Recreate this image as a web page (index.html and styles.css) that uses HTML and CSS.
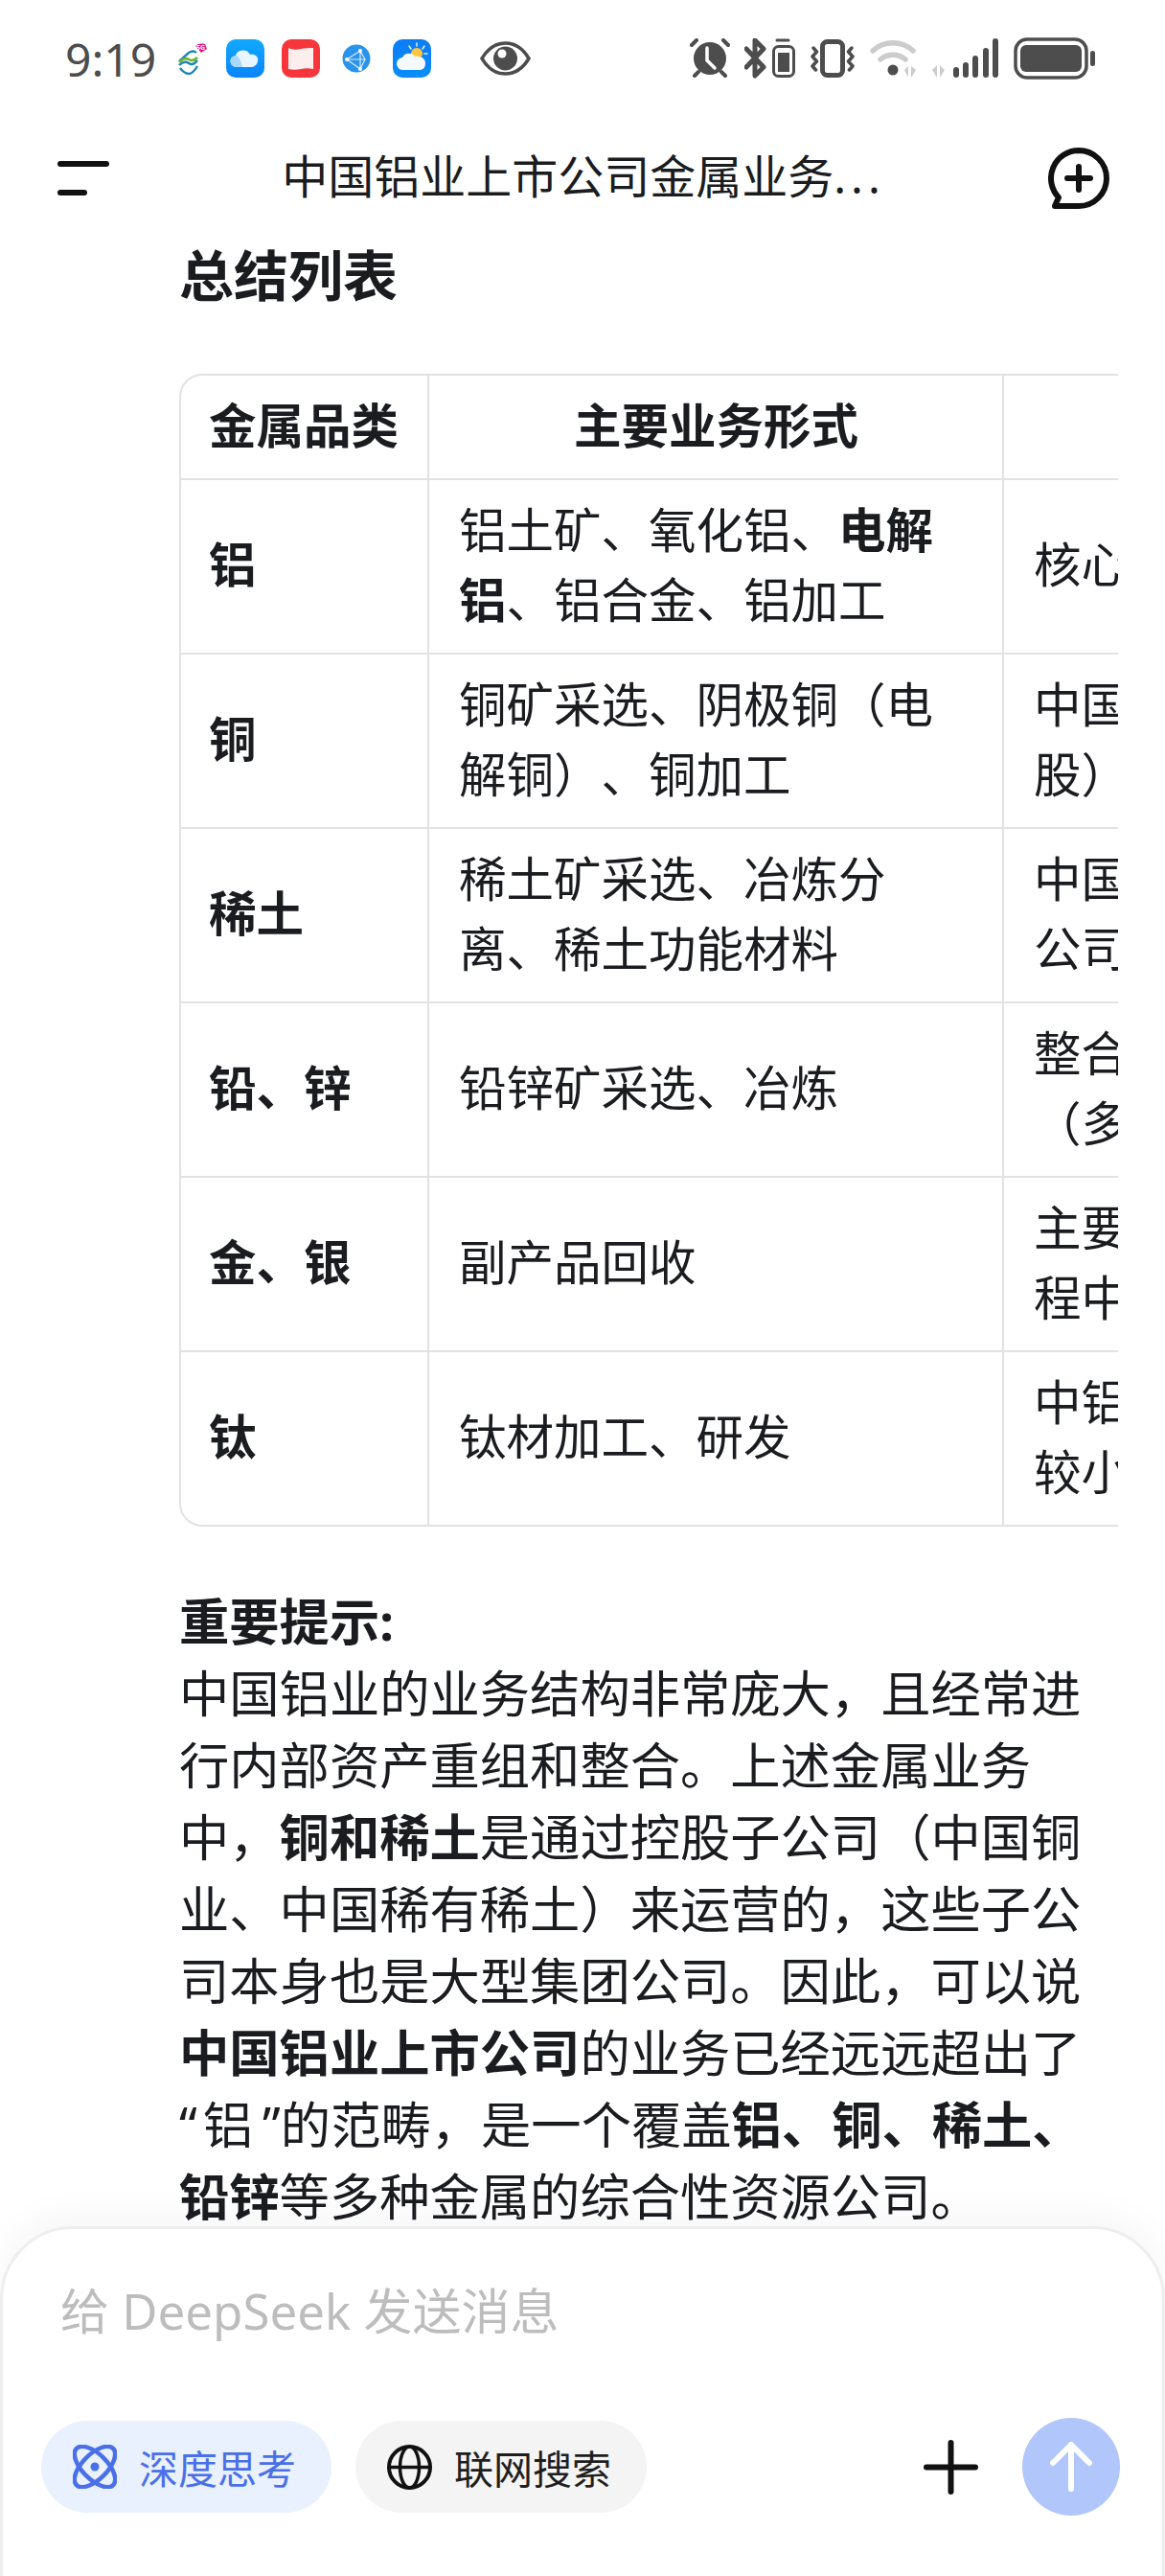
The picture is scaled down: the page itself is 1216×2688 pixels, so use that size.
FILE: index.html
```html
<!DOCTYPE html>
<html lang="zh-CN">
<head>
    <meta charset="UTF-8">
    <meta name="viewport" content="width=device-width, initial-scale=1.0">
    <title>中国铝业上市公司金属业务</title>
    <link rel="stylesheet" href="styles.css">
</head>
<body>
<div class="screen">
    <!-- status bar -->
    <div class="status">
        <div class="status-left">
            <span class="time">9:19</span>
            <svg class="ic-mobile" width="32" height="34" viewBox="0 0 32 34">
                <path d="M20 4c2-3 8-3 10-2l2 5-6 4z" fill="#e0157f"/>
                <text x="21" y="8" class="badge-text">5G</text>
                <path d="M3 20 13 11c3-2 6-2 8 0" fill="none" stroke="#1b86b8" stroke-width="2.4"/>
                <path d="M3 21c3-3 7-5 10-3s6 1 9-2" fill="none" stroke="#6fb52c" stroke-width="2.6"/>
                <path d="M3 24c3-3 7-4 10-2s6 1 9-3" fill="none" stroke="#1b86b8" stroke-width="2.4"/>
                <path d="M4 27c2 3 6 6 9 6s6-3 9-8" fill="none" stroke="#1b86b8" stroke-width="2.4"/>
            </svg>
            <svg class="ic-app ic-cloud" width="40" height="40" viewBox="0 0 40 40">
                <defs>
                    <linearGradient id="skyA" x1="0" y1="0" x2="0" y2="1"><stop offset="0" stop-color="#12aaff"/><stop offset="1" stop-color="#0a84fb"/></linearGradient>
                </defs>
                <rect width="40" height="40" rx="10" fill="url(#skyA)"/>
                <path d="M11 29a6 6 0 0 1-1-12c1-6 12-8 15-1 6-1 9 3 8 7-1 4-4 6-7 6z" fill="#eaf6ff"/>
                <path d="M11 29a6 6 0 0 1-1-12c2 0 4 2 5 5l2 7z" fill="#a9d8fb"/>
            </svg>
            <svg class="ic-app" width="40" height="40" viewBox="0 0 40 40">
                <rect width="40" height="40" rx="10" fill="#f6363b"/>
                <path d="M7 9c4 2 8 2 13 1s9-1 13-1v22c-4-1-9-1-13 0s-9 1-13 0z" fill="#fdeeee"/>
            </svg>
            <svg class="ic-globe" width="30" height="30" viewBox="0 0 30 30">
                <circle cx="15" cy="15" r="14.5" fill="#2a93ec"/>
                <path d="M19 7 5 16l14 10M19 7l5 9-5 10zM5 16h19" fill="none" stroke="#d8eeff" stroke-width="1.2"/>
                <circle cx="19" cy="7" r="2" fill="#fff"/><circle cx="5" cy="16" r="2" fill="#fff"/><circle cx="19" cy="26" r="2" fill="#fff"/>
            </svg>
            <svg class="ic-app ic-weather" width="40" height="40" viewBox="0 0 40 40">
                <defs>
                    <linearGradient id="skyB" x1="0" y1="0" x2="0" y2="1"><stop offset="0" stop-color="#0d7cf4"/><stop offset="1" stop-color="#0a8dfb"/></linearGradient>
                </defs>
                <rect width="40" height="40" rx="10" fill="url(#skyB)"/>
                <circle cx="25" cy="15" r="6" fill="#ffc63d"/>
                <path d="M25 4v3M17 7l2 3M33 7l-2 3M36 15h-3" stroke="#dff1ff" stroke-width="1.5" stroke-linecap="round"/>
                <path d="M11 32a6.500 6.500 0 0 1-1-13c2-5 10-6 13-1 6-1 11 2 11 7s-3 7-6 7z" fill="#f4faff"/>
            </svg>
            <svg class="ic-eye" width="53" height="36" viewBox="0 0 53 36">
                <path d="M2 18C8 8 17 2 26.500 2S45 8 51 18c-6 10-15 16-24.500 16S8 28 2 18z" fill="none" stroke="#4d4d4d" stroke-width="3.500"/>
                <circle cx="26.500" cy="18" r="12.500" fill="#4d4d4d"/>
                <circle cx="23" cy="13" r="4.500" fill="#fff"/>
            </svg>
        </div>
        <div class="status-right">
            <svg width="42" height="42" viewBox="0 0 42 42">
                <circle cx="21" cy="21" r="17" fill="#4d4d4d"/>
                <path d="M2 7 7 2M40 7l-5-5M9 35l-4 4M33 35l4 4" stroke="#4d4d4d" stroke-width="4" stroke-linecap="round"/>
                <path d="M18 10v13l8 8" fill="none" stroke="#fff" stroke-width="3.500" stroke-linecap="round"/>
            </svg>
            <svg width="54" height="42" viewBox="0 0 54 42">
                <path d="M2 11 20 30l-9 9V2l9 9L2 30" fill="none" stroke="#4d4d4d" stroke-width="5" stroke-linejoin="round" stroke-linecap="round"/>
                <path d="M34 2h12" stroke="#4d4d4d" stroke-width="3" stroke-linecap="round"/>
                <rect x="30.500" y="8.500" width="21" height="31" rx="5" fill="none" stroke="#4d4d4d" stroke-width="3"/>
                <rect x="35" y="15" width="12" height="20" fill="#4d4d4d"/>
            </svg>
            <svg width="47" height="40" viewBox="0 0 47 40">
                <rect x="12.500" y="2.500" width="21" height="35" rx="5" fill="none" stroke="#4d4d4d" stroke-width="5"/>
                <path d="M3 9l3.500 4L2 18l4.500 5L2 28l3.500 4M43 9l-3.500 4 4.500 5-4.500 5 4.500 5-3.500 4" fill="none" stroke="#4d4d4d" stroke-width="3.500" stroke-linecap="round" stroke-linejoin="round"/>
            </svg>
            <svg width="50" height="42" viewBox="0 0 50 42">
                <path d="M3 13a31 31 0 0 1 42 0M11 22a20 20 0 0 1 26 0" fill="none" stroke="#cccccc" stroke-width="5.500" stroke-linecap="round"/>
                <circle cx="24" cy="33" r="5.500" fill="#4d4d4d"/>
                <path d="M36 33l4-4v12zM43 29v12l5-8z" fill="#cccccc"/>
            </svg>
            <svg width="70" height="42" viewBox="0 0 70 42">
                <path d="M0 33l5-5v13zM8 28v13l5-8z" fill="#cccccc"/>
                <rect x="22" y="30" width="6" height="11" rx="3" fill="#4d4d4d"/>
                <rect x="32" y="25" width="6" height="16" rx="3" fill="#4d4d4d"/>
                <rect x="42" y="18" width="6" height="23" rx="3" fill="#4d4d4d"/>
                <rect x="53" y="10" width="6" height="31" rx="3" fill="#4d4d4d"/>
                <rect x="63" y="0" width="6" height="41" rx="3" fill="#4d4d4d"/>
            </svg>
            <svg width="85" height="44" viewBox="0 0 85 44">
                <rect x="2" y="2" width="74" height="40" rx="12" fill="none" stroke="#4d4d4d" stroke-width="3.500"/>
                <rect x="7" y="8" width="64" height="28" rx="6" fill="#4d4d4d"/>
                <rect x="80" y="14" width="5" height="16" rx="2.500" fill="#4d4d4d"/>
            </svg>
        </div>
    </div>

    <!-- top nav -->
    <div class="nav">
        <div class="menu-icon"><span class="bar-long"></span><span class="bar-short"></span></div>
        <div class="nav-title">中国铝业上市公司金属业务<span class="dots">...</span></div>
        <svg width="64" height="64" viewBox="0 0 64 64">
            <path d="M32 3a29 29 0 0 1 0 58H7l4-9A29 29 0 0 1 32 3z" fill="none" stroke="#111" stroke-width="6" stroke-linejoin="round"/>
            <path d="M32 20v24M20 32h24" stroke="#111" stroke-width="6" stroke-linecap="round"/>
        </svg>
    </div>

    <div class="article">
        <h2>总结列表</h2>

        <div class="table-wrap">
            <table>
                <thead>
                    <tr>
                        <th class="col-metal">金属品类</th>
                        <th class="col-form">主要业务形式</th>
                        <th class="col-note"></th>
                    </tr>
                </thead>
                <tbody>
                    <tr>
                        <td><strong>铝</strong></td>
                        <td>铝土矿、氧化铝、<strong>电解铝</strong>、铝合金、铝加工</td>
                        <td>核心</td>
                    </tr>
                    <tr>
                        <td><strong>铜</strong></td>
                        <td>铜矿采选、阴极铜（电解铜）、铜加工</td>
                        <td>中国<br>股）</td>
                    </tr>
                    <tr>
                        <td><strong>稀土</strong></td>
                        <td>稀土矿采选、冶炼分离、稀土功能材料</td>
                        <td>中国<br>公司</td>
                    </tr>
                    <tr>
                        <td><strong>铅、锌</strong></td>
                        <td>铅锌矿采选、冶炼</td>
                        <td>整合<br>（多</td>
                    </tr>
                    <tr>
                        <td><strong>金、银</strong></td>
                        <td>副产品回收</td>
                        <td>主要<br>程中</td>
                    </tr>
                    <tr>
                        <td><strong>钛</strong></td>
                        <td>钛材加工、研发</td>
                        <td>中铝<br>较小</td>
                    </tr>
                </tbody>
            </table>
        </div>

        <p class="notice">
            <strong>重要提示:</strong><br>
            中国铝业的业务结构非常庞大，且经常进行内部资产重组和整合。上述金属业务中，<strong>铜和稀土</strong>是通过控股子公司（中国铜业、中国稀有稀土）来运营的，这些子公司本身也是大型集团公司。因此，可以说<strong>中国铝业上市公司</strong>的业务已经远远超出了<span class="q-open">“</span>铝<span class="q-close">”</span>的范畴，是一个覆盖<strong>铝、铜、稀土、铅锌</strong>等多种金属的综合性资源公司。
        </p>
    </div>

    <!-- message box, sits over the article -->
    <div class="composer">
        <div class="placeholder">给 DeepSeek 发送消息</div>
        <div class="composer-row">
            <div class="pill pill-active">
                <svg width="46" height="46" viewBox="0 0 46 46">
                    <ellipse cx="23" cy="23" rx="27" ry="13" transform="rotate(45 23 23)" fill="none" stroke="#4a6fe8" stroke-width="4.500"/>
                    <ellipse cx="23" cy="23" rx="27" ry="13" transform="rotate(-45 23 23)" fill="none" stroke="#4a6fe8" stroke-width="4.500"/>
                    <circle cx="23" cy="23" r="4.500" fill="#4a6fe8"/>
                </svg>
                <span>深度思考</span>
            </div>
            <div class="pill">
                <svg width="47" height="47" viewBox="0 0 47 47">
                    <circle cx="23.500" cy="23.500" r="21.500" fill="none" stroke="#111" stroke-width="4"/>
                    <ellipse cx="23.500" cy="23.500" rx="10" ry="21.500" fill="none" stroke="#111" stroke-width="3.500"/>
                    <path d="M2 23.500h43" stroke="#111" stroke-width="3.500"/>
                </svg>
                <span>联网搜索</span>
            </div>
            <svg class="add-icon" width="57" height="57" viewBox="0 0 57 57">
                <path d="M28.500 3v51M3 28.500h51" stroke="#111" stroke-width="6" stroke-linecap="round"/>
            </svg>
            <div class="send">
                <svg width="44" height="52" viewBox="0 0 44 52">
                    <path d="M22 49V3M3 22 22 3l19 19" fill="none" stroke="#fff" stroke-width="6" stroke-linecap="round" stroke-linejoin="round"/>
                </svg>
            </div>
        </div>
    </div>
</div>
</body>
</html>
```

FILE: styles.css
```css
* {
    box-sizing: border-box;
}
body {
    margin: 0;
    background-color: #fff;
    color: #1a1c20;
    font-family: "Noto Sans", "Noto Sans CJK SC", sans-serif;
    text-spacing-trim: space-all;
}
.screen {
    position: relative;
    width: 1216px;
    height: 2688px;
    overflow: hidden;
}

/* status bar */
.status {
    display: flex;
    justify-content: space-between;
    align-items: center;
    height: 122px;
    padding: 0 73px 0 68px;
}
.status-left, .status-right {
    display: flex;
    align-items: center;
}
.status-right {
    gap: 15px;
}
.time {
    width: 95px;
    font-family: "Noto Sans", sans-serif;
    font-size: 48px;
    color: #4d4d4d;
}
.ic-mobile {
    margin-left: 21px;
}
.ic-app {
    margin-left: 18px;
}
.ic-cloud {
    margin-left: 20px;
}
.ic-globe {
    margin-left: 23px;
}
.ic-weather {
    margin-left: 23px;
}
.ic-eye {
    margin-left: 51px;
}
.badge-text {
    font-size: 7px;
    font-weight: bold;
    fill: #fff;
}

/* nav */
.nav {
    display: flex;
    justify-content: space-between;
    align-items: center;
    height: 122px;
    padding: 6px 58px 0 60px;
}
.menu-icon {
    display: flex;
    flex-direction: column;
    gap: 24px;
    width: 64px;
}
.bar-long, .bar-short {
    display: block;
    height: 6px;
    border-radius: 3px;
    background-color: #111;
}
.bar-long {
    width: 54px;
}
.bar-short {
    width: 31px;
}
.nav-title {
    padding-bottom: 4px;
    font-size: 48px;
    line-height: 64px;
}
.dots {
    letter-spacing: 5px;
}

/* article */
.article {
    padding: 0 80px 0 187px;
}
h2 {
    margin: 3px 0 63px;
    font-size: 57px;
    line-height: 80px;
    font-weight: 700;
}
.table-wrap {
    width: 980px;
    overflow: hidden;
    border: 2px solid #e2e2e2;
    border-right: none;
    border-radius: 24px 0 0 24px;
}
table {
    width: 1400px;
    table-layout: fixed;
    border-collapse: separate;
    border-spacing: 0;
    font-size: 49.5px;
    line-height: 73px;
}
th, td {
    padding: 0 30px 3px 29px;
    text-align: left;
}
th + th, td + td {
    padding-left: 31px;
    border-left: 2px solid #e2e2e2;
}
th {
    height: 107px;
    font-weight: 700;
    white-space: nowrap;
}
td {
    height: 182px;
    border-top: 2px solid #e2e2e2;
}
.col-metal {
    width: 257px;
}
.col-form {
    width: 600px;
    text-align: center;
}
td:last-child {
    white-space: nowrap;
}
.notice {
    margin: 61px 0 0;
    font-size: 52.3px;
    line-height: 75px;
}
.q-open {
    padding-right: 6px;
}
.q-close {
    padding-left: 10px;
}

/* composer */
.composer {
    position: absolute;
    left: 0;
    right: 0;
    top: 2323px;
    bottom: -80px;
    padding: 0 44px 0 40px;
    background-color: #fff;
    border: 3px solid #eeeeee;
    border-radius: 76px 76px 0 0;
    box-shadow: 0 -16px 36px rgba(0, 0, 0, 0.03);
}
.placeholder {
    margin: 50px 0 0 20px;
    font-size: 51px;
    line-height: 70px;
    color: #bdbdbd;
}
.composer-row {
    display: flex;
    align-items: center;
    margin-top: 77px;
}
.pill {
    display: flex;
    align-items: center;
    gap: 23px;
    height: 96px;
    margin-right: 25px;
    padding: 0 37px 0 33px;
    border-radius: 48px;
    background-color: #f4f4f4;
    font-size: 41px;
    color: #1f1f1f;
}
.pill-active {
    background-color: #e9f1ff;
    color: #4a6fe8;
}
.add-icon {
    margin-left: auto;
}
.send {
    display: flex;
    align-items: center;
    justify-content: center;
    width: 102px;
    height: 102px;
    margin-left: 46px;
    border-radius: 50%;
    background-color: #b1c6fb;
}
```
